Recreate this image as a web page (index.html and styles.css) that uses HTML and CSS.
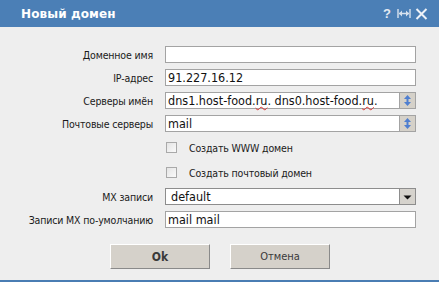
FILE: index.html
```html
<!DOCTYPE html>
<html lang="ru">
<head>
<meta charset="utf-8">
<title>Новый домен</title>
<link rel="stylesheet" href="styles.css">
</head>
<body>
<div class="dialog">
  <div class="titlebar">
    <span class="title">Новый домен</span>
    <div class="tools">
      <span class="tool-help">?</span>
      <svg class="tool-resize" width="14" height="11" viewBox="0 0 14 11">
        <path d="M1 1v9M13 1v9M2 5.5h10" stroke="#d8e2ee" stroke-width="1.4" fill="none"/>
        <path d="M2 5.5l3-3v6zM12 5.5l-3-3v6z" fill="#d8e2ee"/>
      </svg>
      <svg class="tool-close" width="13" height="12" viewBox="0 0 13 12">
        <path d="M1.5 1l10 10M11.5 1l-10 10" stroke="#eef2f8" stroke-width="2" fill="none"/>
      </svg>
    </div>
  </div>
  <div class="body">
    <div class="form">
      <label class="lbl">Доменное имя</label>
      <div class="field"></div>

      <label class="lbl">IP-адрес</label>
      <div class="field">91.227.16.12</div>

      <label class="lbl">Серверы имён</label>
      <div class="field with-btn">
        <span class="val">dns1.host-food.<span class="sp">ru</span>. dns0.host-food.<span class="sp">ru</span>.</span>
        <span class="spin">
          <svg width="9" height="13" viewBox="0 0 9 13"><path d="M4.5 1L1 5h7zM4.5 12L1 8h7z" fill="#4f7fd0"/><path d="M4.5 4v5" stroke="#4f7fd0" stroke-width="2"/></svg>
        </span>
      </div>

      <label class="lbl">Почтовые серверы</label>
      <div class="field with-btn">
        <span class="val">mail</span>
        <span class="spin">
          <svg width="9" height="13" viewBox="0 0 9 13"><path d="M4.5 1L1 5h7zM4.5 12L1 8h7z" fill="#4f7fd0"/><path d="M4.5 4v5" stroke="#4f7fd0" stroke-width="2"/></svg>
        </span>
      </div>

      <span class="lbl"></span>
      <div class="check-row"><span class="cb"></span><span class="cb-text">Создать WWW домен</span></div>

      <span class="lbl"></span>
      <div class="check-row"><span class="cb"></span><span class="cb-text">Создать почтовый домен</span></div>

      <label class="lbl">MX записи</label>
      <div class="field with-btn select">
        <span class="val">default</span>
        <span class="drop">
          <svg width="9" height="5" viewBox="0 0 9 5"><path d="M0.5 0.5h8L4.5 4.5z" fill="#111"/></svg>
        </span>
      </div>

      <label class="lbl">Записи MX по-умолчанию</label>
      <div class="field">mail mail</div>
    </div>

    <div class="buttons">
      <button class="btn btn-ok">Ok</button>
      <button class="btn">Отмена</button>
    </div>
  </div>
</div>
</body>
</html>
```

FILE: styles.css
```css
html, body {
  margin: 0;
  padding: 0;
  background: #eeeeee;
}
body {
  width: 439px;
  height: 282px;
  overflow: hidden;
  font-family: "DejaVu Sans Condensed", "DejaVu Sans", Verdana, sans-serif;
}
.dialog {
  width: 439px;
  height: 282px;
  display: flex;
  flex-direction: column;
  box-sizing: border-box;
  border-bottom: 2px solid #4a7db3;
}
.titlebar {
  height: 27px;
  flex: none;
  background: #4b7fb6;
  display: flex;
  align-items: center;
  padding: 0 11px 0 21px;
}
.title {
  color: #ffffff;
  font-family: "DejaVu Sans", Verdana, sans-serif;
  font-weight: bold;
  font-size: 12px;
  letter-spacing: 0.1px;
  flex: 1;
  padding-top: 1px;
}
.tools {
  display: flex;
  align-items: center;
  gap: 4px;
}
.tool-help {
  color: #e4eaf2;
  font-weight: bold;
  font-size: 13px;
  font-family: "Liberation Sans", Arial, sans-serif;
  margin-right: 2px;
}
.body {
  flex: 1;
  background: #eeeeee;
  padding-top: 19px;
}
.form {
  display: grid;
  grid-template-columns: 153px 251px;
  column-gap: 12px;
  row-gap: 6px;
  align-items: center;
}
.lbl {
  text-align: right;
  font-size: 10.5px;
  letter-spacing: -0.15px;
  color: #1a1a1a;
}
.field {
  height: 17px;
  box-sizing: border-box;
  border: 1px solid #a3a3a3;
  background: #ffffff;
  font-size: 12.5px;
  color: #111;
  line-height: 15px;
  padding-left: 2px;
  white-space: nowrap;
}
.with-btn {
  display: flex;
  align-items: stretch;
  padding-right: 0;
}
.with-btn .val {
  flex: 1;
}
.sp {
  text-decoration: underline wavy #e03030;
  text-decoration-thickness: 1px;
  text-underline-offset: 1px;
}
.spin {
  width: 15px;
  flex: none;
  background: #d5d1c9;
  border-left: 1px solid #a3a3a3;
  display: flex;
  align-items: center;
  justify-content: center;
}
.select {
  border-color: #8d8d8d;
}
.select .val {
  padding-left: 3px;
}
.drop {
  width: 16px;
  flex: none;
  background: #d6d3cd;
  border-left: 1px solid #8d8d8d;
  display: flex;
  align-items: center;
  justify-content: center;
  padding-top: 2px;
  box-sizing: border-box;
}
.check-row {
  height: 19px;
  display: flex;
  align-items: center;
}
.cb {
  width: 9px;
  height: 9px;
  margin-left: 1px;
  border: 1px solid #a9a9a9;
  background: linear-gradient(135deg, #e4e4e4, #fafafa);
}
.cb-text {
  margin-left: 12px;
  font-size: 10.5px;
  letter-spacing: -0.15px;
  color: #1a1a1a;
}
.buttons {
  display: flex;
  justify-content: center;
  gap: 20px;
  margin-top: 16px;
  padding-left: 1px;
}
.btn {
  width: 100px;
  height: 25px;
  box-sizing: border-box;
  background: #d5d1ca;
  border: 1px solid;
  border-color: #ffffff #8a8a8a #8a8a8a #ffffff;
  font-family: "DejaVu Sans Condensed", "DejaVu Sans", Verdana, sans-serif;
  font-size: 11px;
  color: #3a3a3a;
  padding: 0;
  margin: 0;
}
.btn-ok {
  font-weight: bold;
  font-size: 12px;
}
```
